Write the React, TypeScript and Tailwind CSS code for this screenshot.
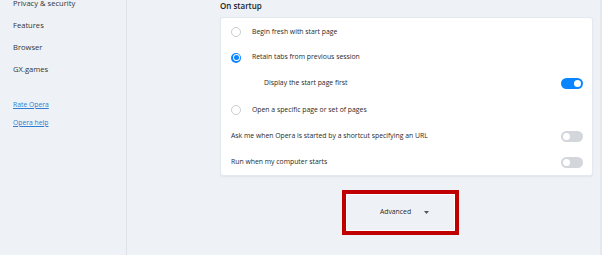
import React from "react";

function Radio({ checked }: { checked?: boolean }) {
  return checked ? (
    <div className="w-[10px] h-[10px] rounded-full bg-[#0a84ff] flex items-center justify-center shrink-0">
      <div className="w-[7px] h-[7px] rounded-full bg-white flex items-center justify-center">
        <div className="w-[5px] h-[5px] rounded-full bg-[#0a84ff]" />
      </div>
    </div>
  ) : (
    <div className="w-[10px] h-[10px] rounded-full border border-[#c9cdd2] bg-white shrink-0" />
  );
}

function Toggle({ on }: { on?: boolean }) {
  return on ? (
    <div className="w-[22px] h-[11px] rounded-full bg-[#0a84ff] flex items-center justify-end pr-[2px]">
      <div className="w-[7px] h-[7px] rounded-full bg-white" />
    </div>
  ) : (
    <div className="w-[22px] h-[11px] rounded-full bg-[#d3d6db] flex items-center justify-start pl-[2px]">
      <div className="w-[7px] h-[7px] rounded-full bg-white" />
    </div>
  );
}

export default function App() {
  const font = { fontFamily: '"Open Sans", "Noto Sans", sans-serif' };
  return (
    <div
      className="w-[602px] h-[255px] bg-[#eef2f6] flex overflow-hidden text-[#2a2a2a]"
      style={font}
    >
      <div className="w-[127px] h-full border-r border-[#dde3ea] pl-[13px] flex flex-col shrink-0">
        <div className="-mt-[7px] flex flex-col text-[7.6px] text-[#333]">
          <div className="h-[22px] flex items-center">Privacy &amp; security</div>
          <div className="h-[22px] flex items-center">Features</div>
          <div className="h-[22px] flex items-center">Browser</div>
          <div className="h-[22px] flex items-center">GX.games</div>
        </div>
        <div className="mt-[15px] flex flex-col text-[6.8px] text-[#2f7fd0]">
          <div className="h-[18px] flex items-center underline">Rate Opera</div>
          <div className="h-[18px] flex items-center underline">Opera help</div>
        </div>
      </div>
      <div className="flex-1 pl-[93px] flex">
        <div className="w-[373px] flex flex-col">
          <div className="h-[12px] flex items-center text-[8px] font-semibold text-[#222]">
            On startup
          </div>
          <div className="mt-[5px] bg-white rounded-[3px] border border-[#e4e9ef] shadow-[0_1px_2px_rgba(0,0,0,0.06)] pt-[1px] flex flex-col text-[6.85px] text-[#2a2a2a]">
            <div className="h-[26px] flex items-center pl-[10px] gap-[11px]">
              <Radio />
              <span>Begin fresh with start page</span>
            </div>
            <div className="h-[25px] flex items-center pl-[10px] gap-[11px]">
              <Radio checked />
              <span>Retain tabs from previous session</span>
            </div>
            <div className="h-[27px] flex items-center pl-[43px] pr-[9px] justify-between">
              <span>Display the start page first</span>
              <Toggle on />
            </div>
            <div className="h-[26px] flex items-center pl-[10px] gap-[11px]">
              <Radio />
              <span>Open a specific page or set of pages</span>
            </div>
            <div className="h-[27px] flex items-center pl-[10px] pr-[9px] justify-between">
              <span>Ask me when Opera is started by a shortcut specifying an URL</span>
              <Toggle />
            </div>
            <div className="h-[25px] flex items-center pl-[10px] pr-[9px] justify-between">
              <span>Run when my computer starts</span>
              <Toggle />
            </div>
          </div>
          <div className="mt-[14px] ml-[122px] w-[117px] h-[45px] border-[4px] border-[#c00000]">
            <div className="w-full h-full border border-white flex items-center justify-center pl-[8px] gap-[13px] text-[6.85px] text-[#2a2a2a]">
              <span>Advanced</span>
              <svg width="5" height="3" viewBox="0 0 5 3">
                <path d="M0 0 L5 0 L2.5 3 Z" fill="#555" />
              </svg>
            </div>
          </div>
        </div>
        <div className="flex-1" />
        <div className="w-[2px] h-full bg-[#e3e8ed]" />
      </div>
    </div>
  );
}
